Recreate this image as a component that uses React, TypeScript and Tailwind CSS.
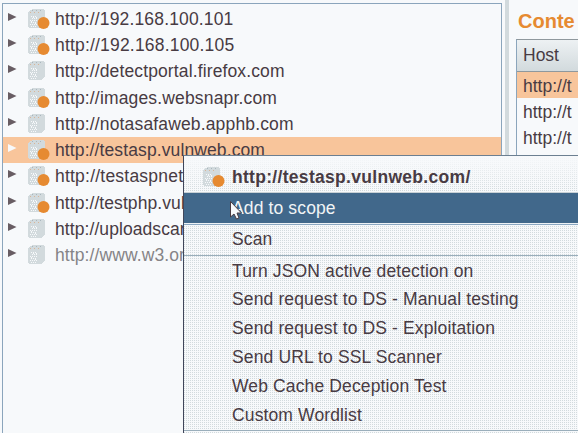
const hosts = [
  { name: 'http://192.168.100.101', dot: true, spacing: 'tracking-[0.15px]' },
  { name: 'http://192.168.100.105', dot: true, spacing: 'tracking-[0.19px]' },
  { name: 'http://detectportal.firefox.com', dot: false, spacing: 'tracking-[0.13px]' },
  { name: 'http://images.websnapr.com', dot: true, spacing: 'tracking-[0.16px]' },
  { name: 'http://notasafaweb.apphb.com', dot: false, spacing: 'tracking-[0.15px]' },
  { name: 'http://testasp.vulnweb.com', dot: true, selected: true, spacing: 'tracking-[0.11px]' },
  { name: 'http://testaspnet.vulnweb.com', dot: true, spacing: 'tracking-[0.22px]' },
  { name: 'http://testphp.vulnweb.com', dot: true, spacing: 'tracking-[0.08px]' },
  { name: 'http://uploadscan.com', dot: false, spacing: 'tracking-[0.08px]' },
  { name: 'http://www.w3.org', dot: false, muted: true, spacing: 'tracking-[0.1px]' },
];

const actions = [
  'Turn JSON active detection on',
  'Send request to DS - Manual testing',
  'Send request to DS - Exploitation',
  'Send URL to SSL Scanner',
  'Web Cache Deception Test',
  'Custom Wordlist',
];

function HostIcon({ dot }: { dot: boolean }) {
  return (
    <svg width="23" height="22" viewBox="0 0 23 22" className="shrink-0" shapeRendering="crispEdges">
      <path d="M1 4L4 2L6 1H15L18 2V17L14 20H2L1 19Z" fill="#d2dadd" />
      <path d="M5 2.5H17" stroke="#a9b6bd" strokeDasharray="1 3" />
      <path d="M3 4.5H15" stroke="#d9b598" strokeDasharray="1 3" />
      <path d="M4 8.5H10M5 10.5H11M3 12.5H10M4 14.5H9M3 16.5H11M4 18.5H9" stroke="#f7f9fb" strokeDasharray="1 1" />
      <path d="M6 9.5H10M4 13.5H6M8 15.5H10" stroke="#f7f9fb" strokeDasharray="1 2" />
      {dot && <circle cx="16.5" cy="15" r="6" fill="#e68a31" shapeRendering="auto" />}
    </svg>
  );
}

function HostRow({ host }: { host: (typeof hosts)[number] }) {
  return (
    <div className={`flex h-[26.3px] shrink-0 items-center ${host.selected ? 'bg-[#f8c59b]' : ''}`}>
      <svg width="9" height="10" viewBox="0 0 9 10" className="relative -top-0.5 ml-[5px] shrink-0">
        <path d="M0 1L8.5 5L0 9Z" fill={host.selected ? '#f7f9fb' : '#685d63'} />
      </svg>
      <div className="ml-2.5"><HostIcon dot={host.dot} /></div>
      <span className={`ml-[5px] whitespace-nowrap text-[17.5px] leading-[26px] ${host.spacing} ${host.muted ? 'text-[#858487]' : 'text-[#483b43]'}`}>
        {host.name}
      </span>
    </div>
  );
}

function ContextMenu() {
  return (
    <div className="absolute left-[183px] top-[155px] flex h-[290px] w-[395px] flex-col border-l border-t border-l-[#40465a] border-t-[#6c7f91] bg-[#f7f9fb] bg-[conic-gradient(from_270deg_at_1px_1px,#d2dadd_90deg,transparent_0)] bg-[length:2px_2px] text-[17.5px] tracking-[0.13px] text-[#483b43]">
      <div className="flex h-9 shrink-0 items-center bg-gradient-to-b from-[#f7f9fb] to-transparent pl-[18px] pt-1.5">
        <HostIcon dot />
        <span className="ml-[7px] whitespace-nowrap font-bold tracking-[0.3px]">http://testasp.vulnweb.com/</span>
      </div>
      <div className="h-px shrink-0 bg-[#c8d1d6]" />
      <div className="flex h-[30px] shrink-0 items-center bg-[#41688b] pl-12 text-[#f0f4f6]">Add to scope</div>
      <div className="h-0.5 shrink-0 border-b border-[#8ba8c2] bg-[#edf2f5]" />
      <div className="flex h-[30px] shrink-0 items-center pb-0.5 pl-12">Scan</div>
      <div className="h-px shrink-0 bg-[#9aaebb]" />
      <div className="pt-[0.4px]">
        {actions.map((label) => (
          <div key={label} className="flex h-[28.8px] items-center whitespace-nowrap pl-12">{label}</div>
        ))}
      </div>
      <div className="mt-px h-px shrink-0 bg-[#9aaebb]" />
    </div>
  );
}

export default function App() {
  return (
    <div className="relative flex h-[433px] w-[578px] overflow-hidden bg-[#f7f9fb] font-['Liberation_Sans',Arial,sans-serif] text-[#483b43]">
      <section className="ml-0.5 mt-[3px] flex w-[500px] shrink-0 flex-col border-l border-r border-t border-[#8ba5bc] pt-[1.5px]">
        {hosts.map((host) => <HostRow key={host.name} host={host} />)}
      </section>
      <div className="ml-[3px] w-1 shrink-0 bg-[#d2dadd]" />
      <section className="ml-[7px] w-[62px] shrink-0 overflow-hidden">
        <h2 className="ml-0.5 mt-2 h-[31px] text-[20px] font-bold leading-[27px] text-[#e68a31]">Conte</h2>
        <div className="h-full border-l border-t border-l-[#8ba5bc] border-t-[#8f989d] text-[17.5px]">
          <div className="h-[32px] border-b border-[#8f989d] bg-gradient-to-b from-[#edf1f3] to-[#d2dadd] pl-1.5 leading-[31px]">Host</div>
          <div className="h-[26px] bg-[#f8c59b] pl-1.5 leading-[29px]">http://t</div>
          <div className="h-[26px] pl-1.5 leading-[29px]">http://t</div>
          <div className="h-[26px] pl-1.5 leading-[29px]">http://t</div>
        </div>
      </section>
      <ContextMenu />
      <svg width="14" height="21" viewBox="0 0 14 21" className="absolute left-[229px] top-[200px]">
        <path d="M1.5 1.5V17L5 14L7.5 19L10 18L8 13H12.5Z" fill="#f7f9fb" stroke="#483b43" />
      </svg>
    </div>
  );
}
